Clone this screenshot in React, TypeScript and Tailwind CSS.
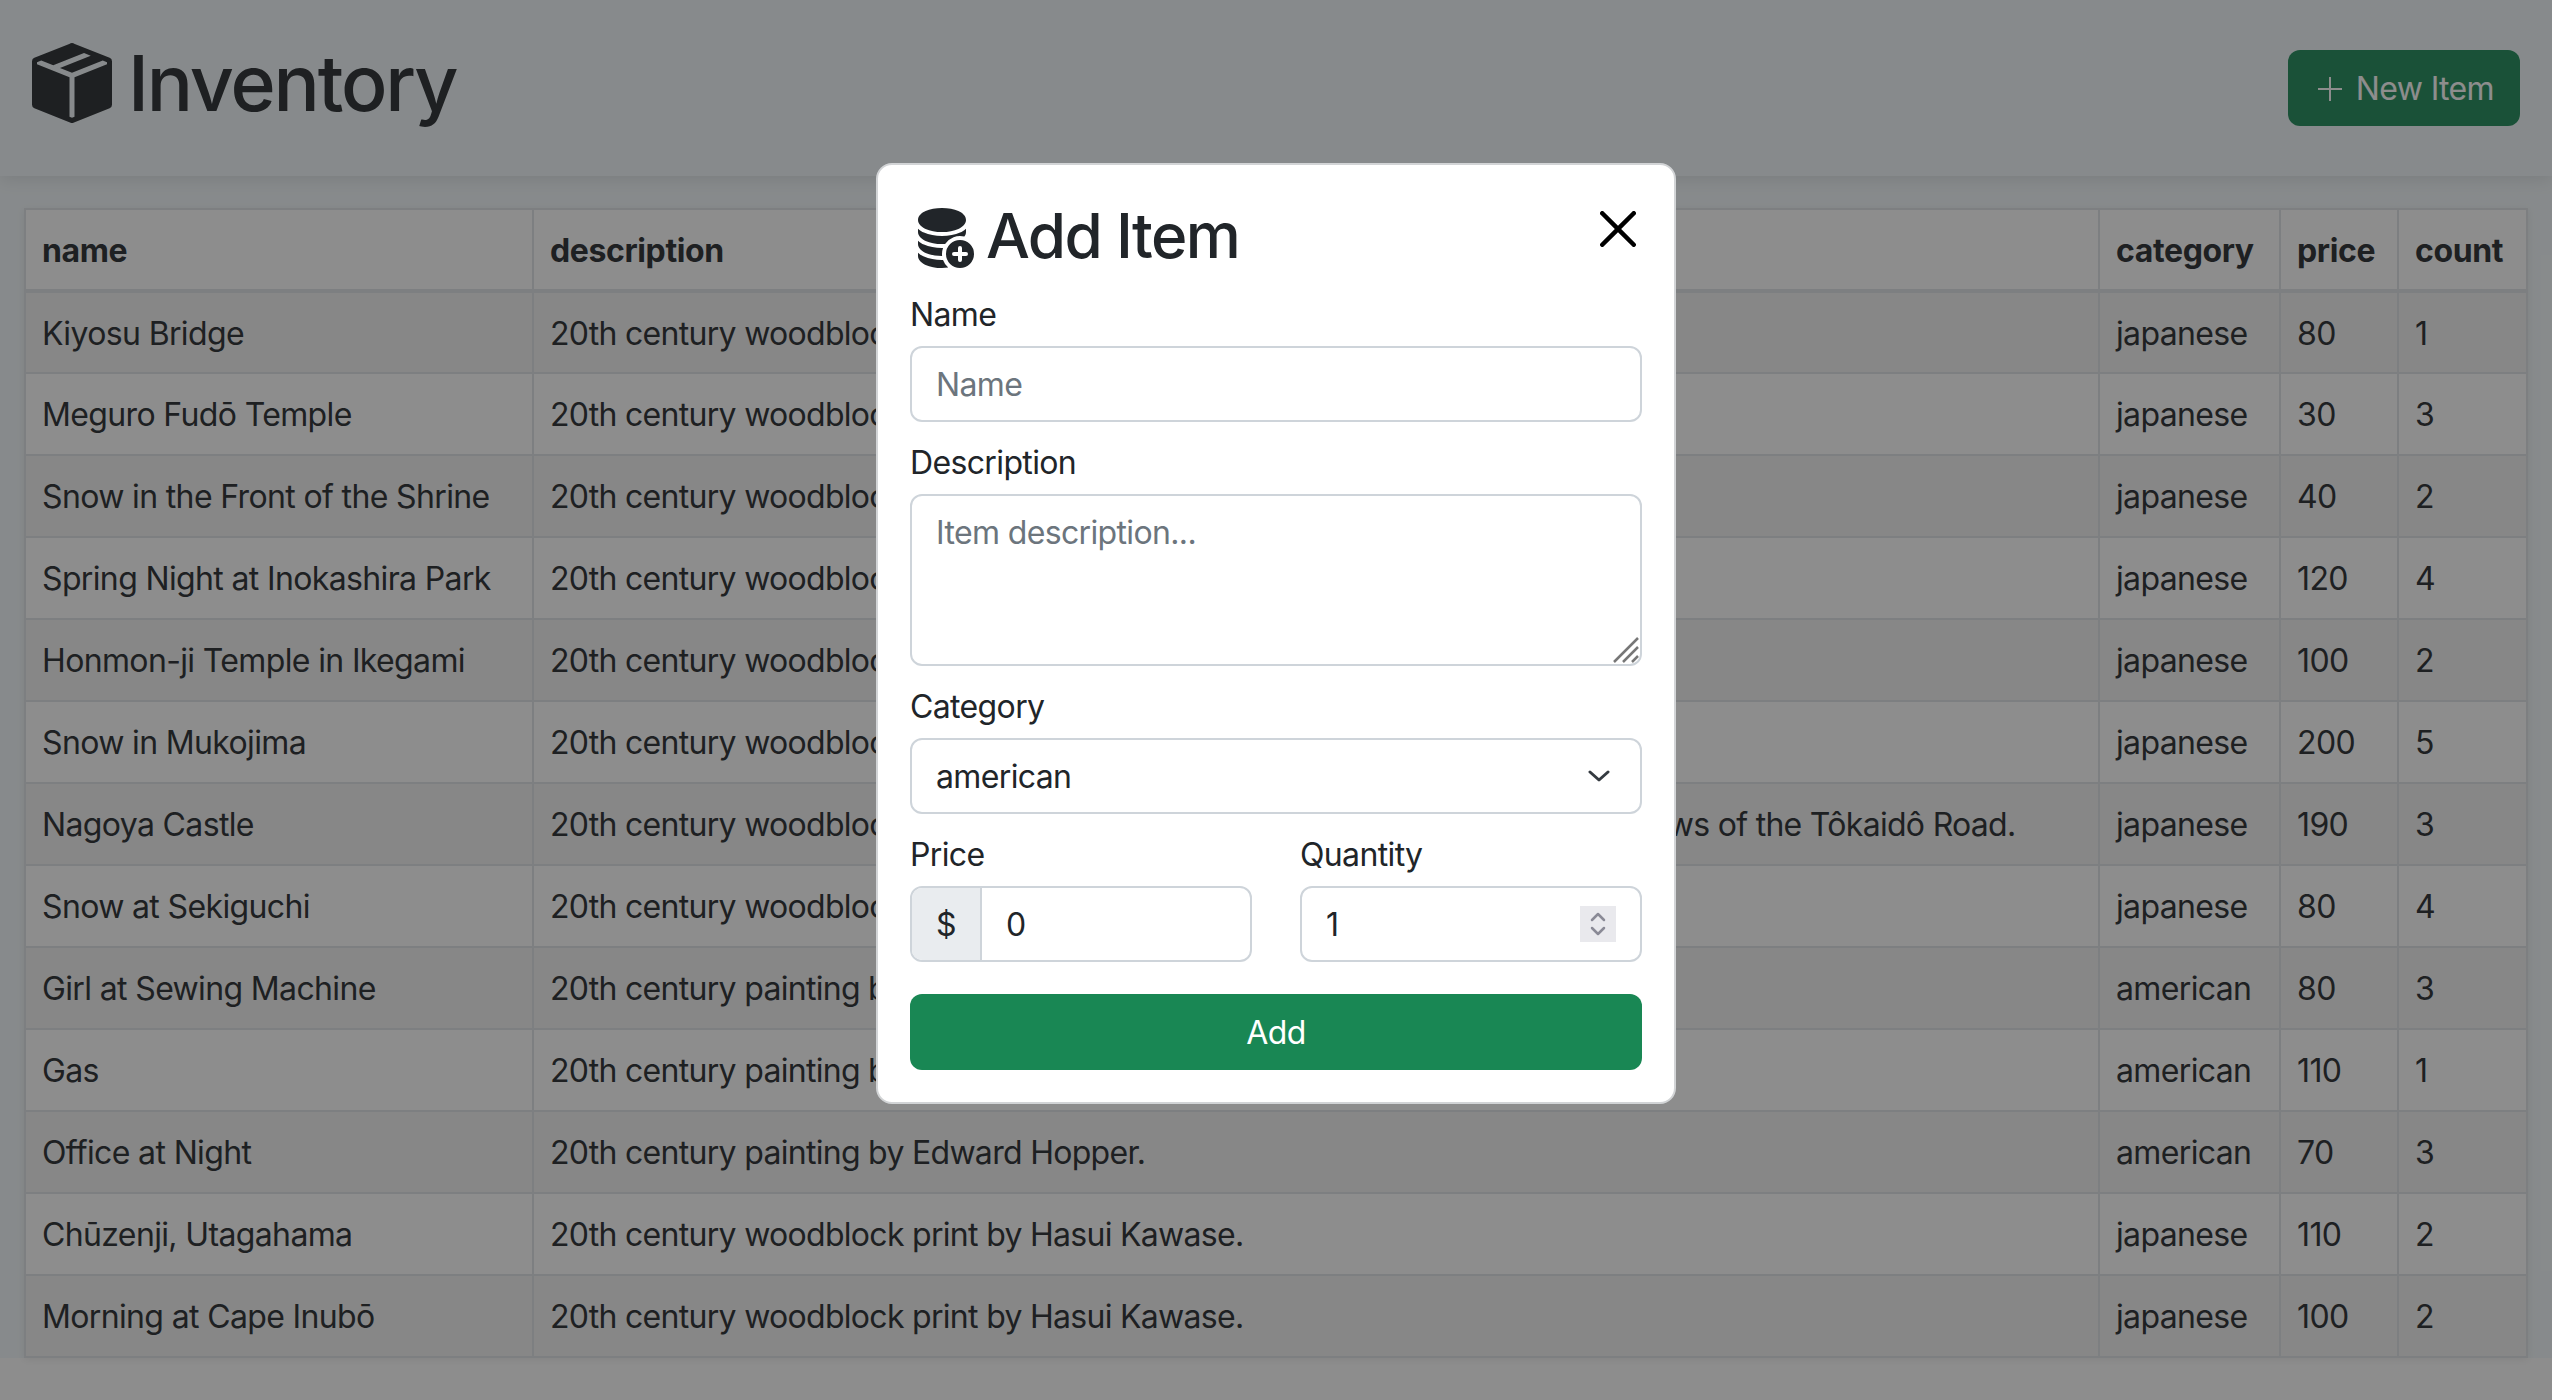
import { BsBoxSeamFill, BsDatabaseFillAdd } from 'react-icons/bs';

const japanese = '20th century woodblock print by Hasui Kawase.';
const hopper = '20th century painting by Edward Hopper.';

const items = [
    { name: 'Kiyosu Bridge', description: japanese, category: 'japanese', price: 80, count: 1 },
    { name: 'Meguro Fudō Temple', description: japanese, category: 'japanese', price: 30, count: 3 },
    { name: 'Snow in the Front of the Shrine', description: japanese, category: 'japanese', price: 40, count: 2 },
    { name: 'Spring Night at Inokashira Park', description: japanese, category: 'japanese', price: 120, count: 4 },
    { name: 'Honmon-ji Temple in Ikegami', description: japanese, category: 'japanese', price: 100, count: 2 },
    { name: 'Snow in Mukojima', description: japanese, category: 'japanese', price: 200, count: 5 },
    {
        name: 'Nagoya Castle',
        description: '20th century woodblock print by Hasui Kawase from the series of Twenty Views of the Tôkaidô Road.',
        category: 'japanese',
        price: 190,
        count: 3,
    },
    { name: 'Snow at Sekiguchi', description: japanese, category: 'japanese', price: 80, count: 4 },
    { name: 'Girl at Sewing Machine', description: hopper, category: 'american', price: 80, count: 3 },
    { name: 'Gas', description: hopper, category: 'american', price: 110, count: 1 },
    { name: 'Office at Night', description: hopper, category: 'american', price: 70, count: 3 },
    { name: 'Chūzenji, Utagahama', description: japanese, category: 'japanese', price: 110, count: 2 },
    { name: 'Morning at Cape Inubō', description: japanese, category: 'japanese', price: 100, count: 2 },
];

const columns = ['name', 'description', 'category', 'price', 'count'];

export default function App() {
    return (
        <div className="relative min-h-[1400px] bg-white font-['Inter',sans-serif] text-[32px] leading-[48px] tracking-[-0.02em] text-[#212529]">
            <div className="bg-[#f3f9fc]">
                <header className="flex h-[176px] items-center justify-between px-8 shadow-[0_4px_16px_rgba(0,0,0,0.1)]">
                    <h1 className="flex items-center gap-4 pb-[10px] text-[77px] leading-[96px] font-medium tracking-[-0.028em]">
                        <BsBoxSeamFill className="h-20 w-20" />
                        Inventory
                    </h1>
                    <button className="flex h-[76px] items-center gap-[14px] rounded-xl bg-[#198754] pt-[1px] pr-[26px] pl-[30px] text-white">
                        <svg viewBox="0 0 24 24" className="h-6 w-6" fill="none" stroke="currentColor" strokeWidth="2">
                            <path d="M12 0v24M0 12h24" />
                        </svg>
                        New Item
                    </button>
                </header>

                <div className="px-6 pt-8">
                    <table className="w-full table-fixed border-collapse bg-white shadow-[0_2px_8px_rgba(0,0,0,0.08)]">
                        <colgroup>
                            <col className="w-[508px]" />
                            <col />
                            <col className="w-[181px]" />
                            <col className="w-[118px]" />
                            <col className="w-[129px]" />
                        </colgroup>
                        <thead>
                            <tr className="border-b-4 border-[#dee2e6]">
                                {columns.map((column) => (
                                    <th key={column} className="h-[82px] border-2 border-[#dee2e6] px-4 pt-[2px] text-left font-bold tracking-[-0.012em]">
                                        {column}
                                    </th>
                                ))}
                            </tr>
                        </thead>
                        <tbody>
                            {items.map((item, index) => (
                                <tr key={item.name} className={index % 2 === 0 ? 'bg-[#f2f2f2]' : 'bg-white'}>
                                    <td className="h-[82px] border-2 border-[#dee2e6] px-4 pt-[2px] whitespace-nowrap">{item.name}</td>
                                    <td className="h-[82px] border-2 border-[#dee2e6] px-4 pt-[2px] tracking-[-0.022em] whitespace-nowrap">{item.description}</td>
                                    <td className="h-[82px] border-2 border-[#dee2e6] px-4 pt-[2px]">{item.category}</td>
                                    <td className="h-[82px] border-2 border-[#dee2e6] px-4 pt-[2px]">{item.price}</td>
                                    <td className="h-[82px] border-2 border-[#dee2e6] px-4 pt-[2px]">{item.count}</td>
                                </tr>
                            ))}
                        </tbody>
                    </table>
                </div>
            </div>

            <div className="absolute inset-0 flex justify-center bg-[#1c1c1c]/50 pt-[163px]">
                <form className="flex h-[941px] w-[800px] flex-col rounded-2xl border-2 border-[#d2d4d6] bg-white px-8 pt-[33px] pb-8">
                    <div className="mb-4 flex h-[76px] items-start justify-between">
                        <h2 className="flex items-center gap-3 text-[62px] leading-[76px] font-medium tracking-[-0.027em]">
                            <BsDatabaseFillAdd className="h-[64px] w-[64px]" />
                            Add Item
                        </h2>
                        <button type="button" className="mt-[13px] mr-[6px] text-black">
                            <svg viewBox="0 0 16 16" className="h-9 w-9" fill="currentColor">
                                <path d="M.293.293a1 1 0 0 1 1.414 0L8 6.586 14.293.293a1 1 0 1 1 1.414 1.414L9.414 8l6.293 6.293a1 1 0 0 1-1.414 1.414L8 9.414l-6.293 6.293a1 1 0 0 1-1.414-1.414L6.586 8 .293 1.707a1 1 0 0 1 0-1.414z" />
                            </svg>
                        </button>
                    </div>

                    <label className="mb-2 block h-12 pt-[1px]">Name</label>
                    <input
                        placeholder="Name"
                        className="mb-4 h-[76px] w-full rounded-xl border-2 border-[#ced4da] px-6 placeholder:text-[#6c757d]"
                    />

                    <label className="mb-2 block h-12 pt-[1px]">Description</label>
                    <div className="relative mb-4 h-[172px]">
                        <textarea
                            placeholder="Item description..."
                            className="h-full w-full resize-none rounded-xl border-2 border-[#ced4da] px-6 py-[13px] placeholder:text-[#6c757d]"
                        />
                        <svg viewBox="0 0 26 26" className="absolute right-[3px] bottom-[3px] h-[26px] w-[26px]" fill="none" stroke="#777" strokeWidth="2.5">
                            <path d="M1 25L25 1M10 25L25 10M19 25l6-6" />
                        </svg>
                    </div>

                    <label className="mb-2 block h-12 pt-[1px]">Category</label>
                    <div className="mb-4 flex h-[76px] items-center justify-between rounded-xl border-2 border-[#ced4da] pr-[30px] pl-6">
                        <span className="pt-[1px]">american</span>
                        <svg viewBox="0 0 22 12" className="h-3 w-[22px]" fill="none" stroke="#343a40" strokeWidth="3" strokeLinecap="round" strokeLinejoin="round">
                            <path d="M2 2l9 8 9-8" />
                        </svg>
                    </div>

                    <div className="mb-8 grid grid-cols-2 gap-12">
                        <div>
                            <label className="mb-2 block h-12 pt-[1px]">Price</label>
                            <div className="flex h-[76px] overflow-hidden rounded-xl border-2 border-[#ced4da]">
                                <span className="flex w-[70px] items-center justify-center border-r-2 border-[#ced4da] bg-[#e9ecef] pt-[1px]">$</span>
                                <input readOnly value="0" className="min-w-0 flex-1 px-6 pt-[2px]" />
                            </div>
                        </div>
                        <div>
                            <label className="mb-2 block h-12 pt-[1px]">Quantity</label>
                            <div className="flex h-[76px] items-center rounded-xl border-2 border-[#ced4da] pr-6 pl-6">
                                <input readOnly value="1" className="min-w-0 flex-1 pt-[2px]" />
                                <span className="flex h-9 w-9 items-center justify-center bg-[#e9e9ed]">
                                    <svg viewBox="0 0 16 24" className="h-6 w-4" fill="none" stroke="#8a8a96" strokeWidth="2.5" strokeLinecap="round" strokeLinejoin="round">
                                        <path d="M2 8l6-6 6 6M2 16l6 6 6-6" />
                                    </svg>
                                </span>
                            </div>
                        </div>
                    </div>

                    <button type="button" className="h-[76px] w-full rounded-xl bg-[#198754] pt-[1px] text-white">
                        Add
                    </button>
                </form>
            </div>
        </div>
    );
}
